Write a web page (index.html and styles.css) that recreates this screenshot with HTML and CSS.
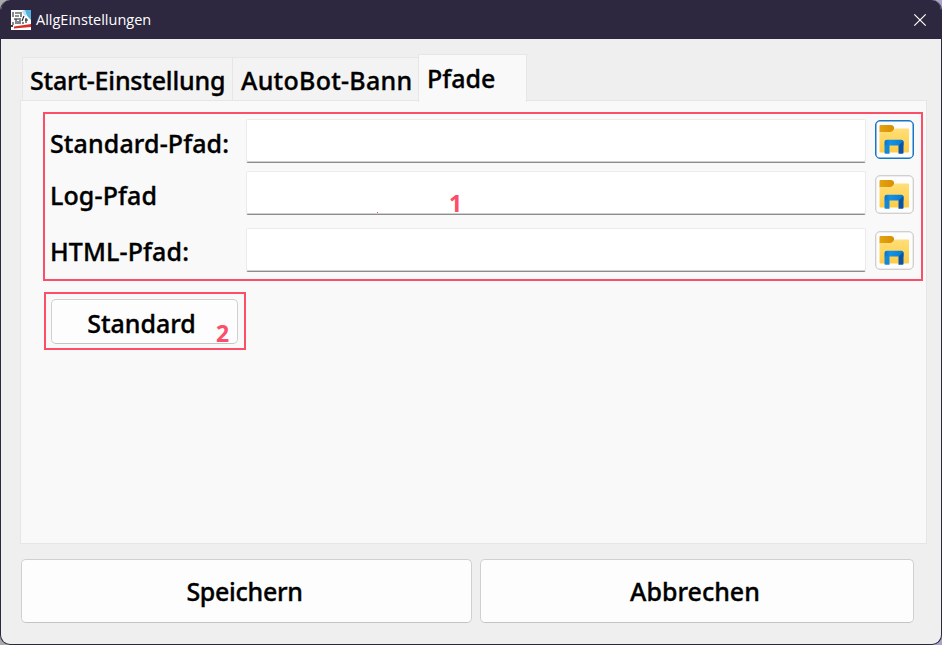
FILE: index.html
```
<!DOCTYPE html>
<html lang="de">
<head>
<meta charset="utf-8">
<title>AllgEinstellungen</title>
<link rel="stylesheet" href="styles.css">
</head>
<body>
<svg width="0" height="0" class="defs">
  <defs>
    <linearGradient id="folderBody" x1="0" y1="0" x2="0" y2="1"><stop offset="0" stop-color="#ffdf78"/><stop offset="1" stop-color="#ffcc45"/></linearGradient>
    <linearGradient id="folderTab" x1="0" y1="0" x2="1" y2="0"><stop offset="0" stop-color="#e3a414"/><stop offset="1" stop-color="#d78f00"/></linearGradient>
    <linearGradient id="clip" x1="0" y1="0" x2="1" y2="0"><stop offset="0" stop-color="#0a72cb"/><stop offset=".3" stop-color="#1393e4"/><stop offset="1" stop-color="#087acd"/></linearGradient>
    <symbol id="folder" viewBox="0 0 32 32">
      <path fill="url(#folderBody)" d="M.5 7 H13 L16 4.6 H29 Q30 4.6 30 5.6 V27.5 Q30 28.5 29 28.5 H1.5 Q.5 28.5 .5 27.5Z"/>
      <path fill="url(#folderTab)" d="M1.5 1 H12 Q14 1 15 3 Q15.5 4.5 14.5 6 Q13 8 11 8 H.5 V2 Q.5 1 1.5 1Z"/>
      <path fill="url(#clip)" d="M8 15.7 H22.5 Q24.5 15.7 24.5 17.7 V21.5 H5.5 V17.7 Q5.5 15.7 8 15.7Z"/>
      <path fill="#1387dc" d="M5.5 21 H10.5 V29.7 H6.5 Q5.5 29.7 5.5 28.7Z"/>
      <path fill="#0954a6" d="M19.5 21.5 L24.5 17 V28.7 Q24.5 29.7 23.5 29.7 H19.5Z"/>
    </symbol>
  </defs>
</svg>
<div class="window">
  <header class="titlebar">
    <svg class="app-icon" width="20" height="20" viewBox="0 0 20 20">
      <path fill="#fff" d="M0 0H20V20H0Z"/>
      <path fill="#54b4df" d="M13 0H20V10L17 7L15 4Z"/>
      <path fill="#b9e3f3" d="M11 1L14 0L16 6L13 5Z"/>
      <path fill="none" stroke="#20232c" stroke-width="1.1" d="M2 2V7M4 3H9M4 6H8M10 2V7M3 9H8M5 9V14M9 8V14M11 11L13 6M12 12V14M15 8V13M14 10H17M2 12V15M7 11V14"/>
      <path fill="#d92f2b" d="M3 16.5L20 14V17L3 18.5Z"/>
      <path fill="#59322d" d="M0 15H2V17H0Z"/>
    </svg>
    <span class="title"><span>AllgEinstellungen</span></span>
    <svg class="close" width="14" height="14" viewBox="0 0 14 14"><path d="M1.3 1.3L12.7 12.7M12.7 1.3L1.3 12.7"/></svg>
  </header>
  <main class="content">
    <nav class="tabs">
      <div class="tab tab-start"><span>Start-Einstellung</span></div>
      <div class="tab tab-bot"><span>AutoBot-Bann</span></div>
      <div class="tab tab-active"><span>Pfade</span></div>
    </nav>
    <section class="panel">
      <div class="paths">
        <label class="label" for="standard">Standard-Pfad:</label><input id="standard" class="field"><button class="browse focused"><svg><use href="#folder"/></svg></button>
        <label class="label" for="log">Log-Pfad</label><input id="log" class="field"><button class="browse lowered"><svg><use href="#folder"/></svg></button>
        <label class="label" for="html">HTML-Pfad:</label><input id="html" class="field"><button class="browse lowered"><svg><use href="#folder"/></svg></button>
        <span class="number number-one">1</span>
        <i class="speck"></i>
      </div>
      <div class="defaults">
        <button class="button">Standard</button>
        <span class="number number-two">2</span>
      </div>
    </section>
    <footer class="actions">
      <button class="button save">Speichern</button>
      <button class="button cancel">Abbrechen</button>
    </footer>
  </main>
</div>
</body>
</html>
```
FILE: styles.css
```
* { box-sizing: border-box; }
body {
  margin: 0;
  background: linear-gradient(90deg, #aaa, #aaa5cc);
  font: 500 25px/34px "Noto Sans", "Open Sans", sans-serif;
  letter-spacing: 0;
  -webkit-text-stroke: .35px currentColor;
  color: #000;
  overflow: hidden;
}
.defs { position: absolute; }
.window {
  width: 942px;
  height: 645px;
  border: 1px solid #2d2840;
  border-top: 0;
  border-radius: 10px;
  background: #efefef;
  overflow: hidden;
}
.titlebar {
  height: 39px;
  padding: 0 14px 0 10px;
  display: flex;
  align-items: center;
  background: #2d2840;
  color: #fff;
  -webkit-text-stroke: 0;
}
.title { margin-left: 5px; flex: 1; font: 400 14.5px/20px "Open Sans", sans-serif; }
.close { stroke: #fff; stroke-width: 1.2; fill: none; }
.content { padding: 15px 14px 0 19px; }
.tabs { display: flex; align-items: flex-end; height: 46px; padding-left: 2px; }
.tab {
  height: 43px;
  border: 1px solid #e6e6e6;
  border-bottom: 0;
  background: #f3f3f3;
  padding: 5px 0 0 7px;
  white-space: nowrap;
}
.tab-start { width: 211px; letter-spacing: -.2px; }
.tab-bot { width: 185px; padding-left: 8px; border-left: 0; border-right: 0; letter-spacing: .28px; }
.tab-active {
  width: 109px;
  height: 48px;
  padding: 6px 0 0 8px;
  margin-bottom: -2px;
  background: #f9f9f9;
  z-index: 1;
}
.panel {
  height: 444px;
  border: 1px solid #e6e6e6;
  background: #f9f9f9;
  padding: 11px 3px 0 22px;
}
.paths {
  position: relative;
  width: 880px;
  height: 169px;
  border: 2px solid #fb4e68;
  padding: 5px 7px 0 5px;
  display: grid;
  grid-template-columns: 196px 620px 40px;
  grid-template-rows: 52px 56px 45px;
  column-gap: 8px;
}
.label { margin-top: 7px; white-space: nowrap; margin-right: -8px; letter-spacing: .12px; }
.field {
  margin-left: -8px;
  width: 620px;
  height: 44px;
  border: 1px solid #ebebeb;
  border-bottom: 1px solid #8d8d8d;
  box-shadow: inset 0 -1px #d0d0d0;
  border-radius: 2px;
  background: #fff;
  outline: 0;
}
#html { margin-top: 1px; }
.browse {
  margin: 1px 0 0 -7px;
  width: 39px;
  height: 39px;
  padding: 3px;
  border: 1px solid #d0d0d0;
  border-radius: 5px;
  background: #fdfdfd;
  box-shadow: inset 0 0 0 .5px #ddd;
}
.lowered { margin-top: 4px; }
.browse svg { display: block; width: 32px; height: 32px; }
.focused { border: 1px solid #1675c5; box-shadow: inset 0 0 0 .5px #1675c5; }
.number { position: absolute; color: #fb4e68; font: 700 23px/26px "Noto Sans", sans-serif; -webkit-text-stroke: 0; }
.number-one { left: 404px; top: 76px; }
.number-two { left: 170px; top: 26px; }
.speck { position: absolute; left: 332px; top: 98px; width: 1px; height: 1px; background: #fb4e68; }
.defaults {
  position: relative;
  width: 202px;
  height: 58px;
  margin: 11px 0 0 1px;
  padding: 5px;
  border: 2px solid #fb4e68;
}
.button {
  display: block;
  border: 1px solid #d0d0d0;
  border-bottom-color: #c4c4c4;
  border-radius: 5px;
  background: #fdfdfd;
  font: inherit;
  letter-spacing: inherit;
  color: inherit;
  padding: 0;
}
.defaults .button { width: 187px; height: 45px; padding: 2px 6px 0 0; }
.actions { display: flex; gap: 8px; margin: 15px 0 0 1px; }
.actions .button { height: 64px; padding: 0 4px 1px 0; }
.actions .save { width: 451px; letter-spacing: -.3px; }
.cancel { width: 434px; }
```
